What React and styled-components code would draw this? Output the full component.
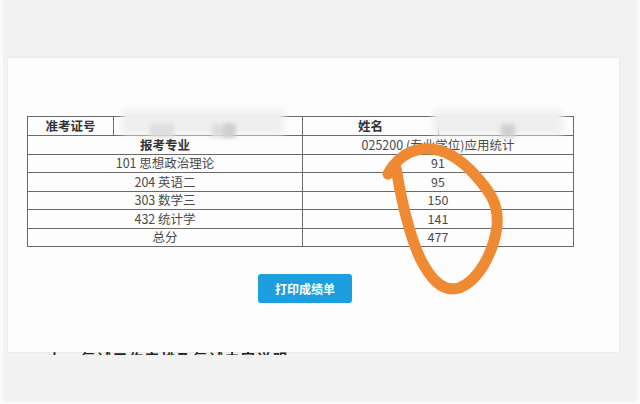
import React from "react";
import styled, { createGlobalStyle } from "styled-components";

const Global = createGlobalStyle`
  html, body { margin: 0; padding: 0; background: #fbfbfb; }
  body { font-family: "Noto Sans CJK SC", "Noto Sans", sans-serif; }
`;

const Frame = styled.div`
  position: relative;
  width: 640px;
  height: 404px;
  overflow: hidden;
  background: #fbfbfb;
  padding: 0 3px 2px 3px;
  box-sizing: border-box;
`;

const Backdrop = styled.div`
  height: 100%;
  background: #f2f2f2;
  padding-top: 58px;
  box-sizing: border-box;
`;

const Card = styled.div`
  margin-left: 5px;
  width: 611px;
  height: 294px;
  background: #fdfdfd;
  box-shadow: 0 0 2px rgba(0, 0, 0, 0.08);
  padding: 58px 0 0 19px;
  box-sizing: border-box;
`;

const Table = styled.table`
  border-collapse: collapse;
  width: 546px;
  table-layout: fixed;
  font-size: 12.5px;
  color: #4a4a4a;
  line-height: 1;
`;

const Row = styled.tr`
  height: ${(p) => p.$h}px;
`;

const Cell = styled.td`
  position: relative;
  border: 1px solid #6a6a6a;
  padding: 0;
  text-align: center;
  vertical-align: middle;
  font-weight: ${(p) => (p.$bold ? 700 : 400)};
  color: ${(p) => (p.$bold ? "#333" : "#4a4a4a")};
  white-space: nowrap;
`;

const Blur = styled.div`
  position: absolute;
  top: -7px;
  left: ${(p) => p.$left}px;
  width: ${(p) => p.$w}px;
  height: 25px;
  background: #efefef;
  filter: blur(3px);
  pointer-events: none;
`;

const Smudge = styled.div`
  position: absolute;
  top: 7px;
  left: ${(p) => p.$left}px;
  width: ${(p) => p.$w}px;
  height: 13px;
  background: ${(p) => p.$c};
  filter: blur(2px);
`;

const ButtonRow = styled.div`
  padding: 27px 0 0 231px;
`;

const PrintButton = styled.button`
  width: 94px;
  height: 29px;
  border: none;
  border-radius: 3px;
  background: #1b9fde;
  color: #fff;
  font-family: "Noto Sans CJK SC", sans-serif;
  font-size: 12px;
  font-weight: 700;
  padding: 0;
`;

const Peek = styled.div`
  height: 4px;
  overflow: hidden;
  padding-left: 46px;
  font-size: 14px;
  line-height: 14px;
  color: #222;
  font-weight: 700;
  letter-spacing: 2px;
  margin-top: -1px;
`;

const Annotation = styled.svg`
  position: absolute;
  left: 0;
  top: 0;
  pointer-events: none;
`;

const rows = [
  ["101 思想政治理论", "91"],
  ["204 英语二", "95"],
  ["303 数学三", "150"],
  ["432 统计学", "141"],
  ["总分", "477"],
];

export default function App() {
  return (
    <>
      <Global />
      <Frame>
        <Backdrop>
          <Card>
            <Table>
              <colgroup>
                <col style={{ width: 86 }} />
                <col style={{ width: 189 }} />
                <col style={{ width: 136 }} />
                <col style={{ width: 135 }} />
              </colgroup>
              <tbody>
                <Row $h={19}>
                  <Cell $bold>准考证号</Cell>
                  <Cell>
                    <Blur $left={8} $w={162} />
                    <Smudge $left={36} $w={24} $c="#dedede" />
                    <Smudge $left={98} $w={22} $c="#dcdcdc" />
                    <Smudge $left={110} $w={11} $c="#cdcdcd" />
                  </Cell>
                  <Cell $bold>姓名</Cell>
                  <Cell>
                    <Blur $left={-6} $w={130} />
                    <Smudge $left={62} $w={14} $c="#d0d0d0" />
                  </Cell>
                </Row>
                <Row $h={19}>
                  <Cell colSpan={2} $bold>报考专业</Cell>
                  <Cell colSpan={2}>025200 (专业学位)应用统计</Cell>
                </Row>
                {rows.map(([name, score], i) => (
                  <Row key={name} $h={i % 2 === 0 ? 18 : 19}>
                    <Cell colSpan={2}>{name}</Cell>
                    <Cell colSpan={2}>{score}</Cell>
                  </Row>
                ))}
              </tbody>
            </Table>
            <ButtonRow>
              <PrintButton>打印成绩单</PrintButton>
            </ButtonRow>
          </Card>
          <Peek>九、复试工作安排及复试内容说明</Peek>
        </Backdrop>
        <Annotation width="640" height="404" viewBox="0 0 640 404">
          <path
            d="M388,174 C394,162 406,151 422,149 C441,147 460,158 476,176 C490,192 499,204 497,226 C494,250 480,280 459,288 C441,293 429,276 420,258 C410,236 404,210 400,190 C398,180 397,172 396,168"
            fill="none"
            stroke="#f08a32"
            strokeWidth="11"
            strokeLinecap="round"
            strokeLinejoin="round"
          />
        </Annotation>
      </Frame>
    </>
  );
}
